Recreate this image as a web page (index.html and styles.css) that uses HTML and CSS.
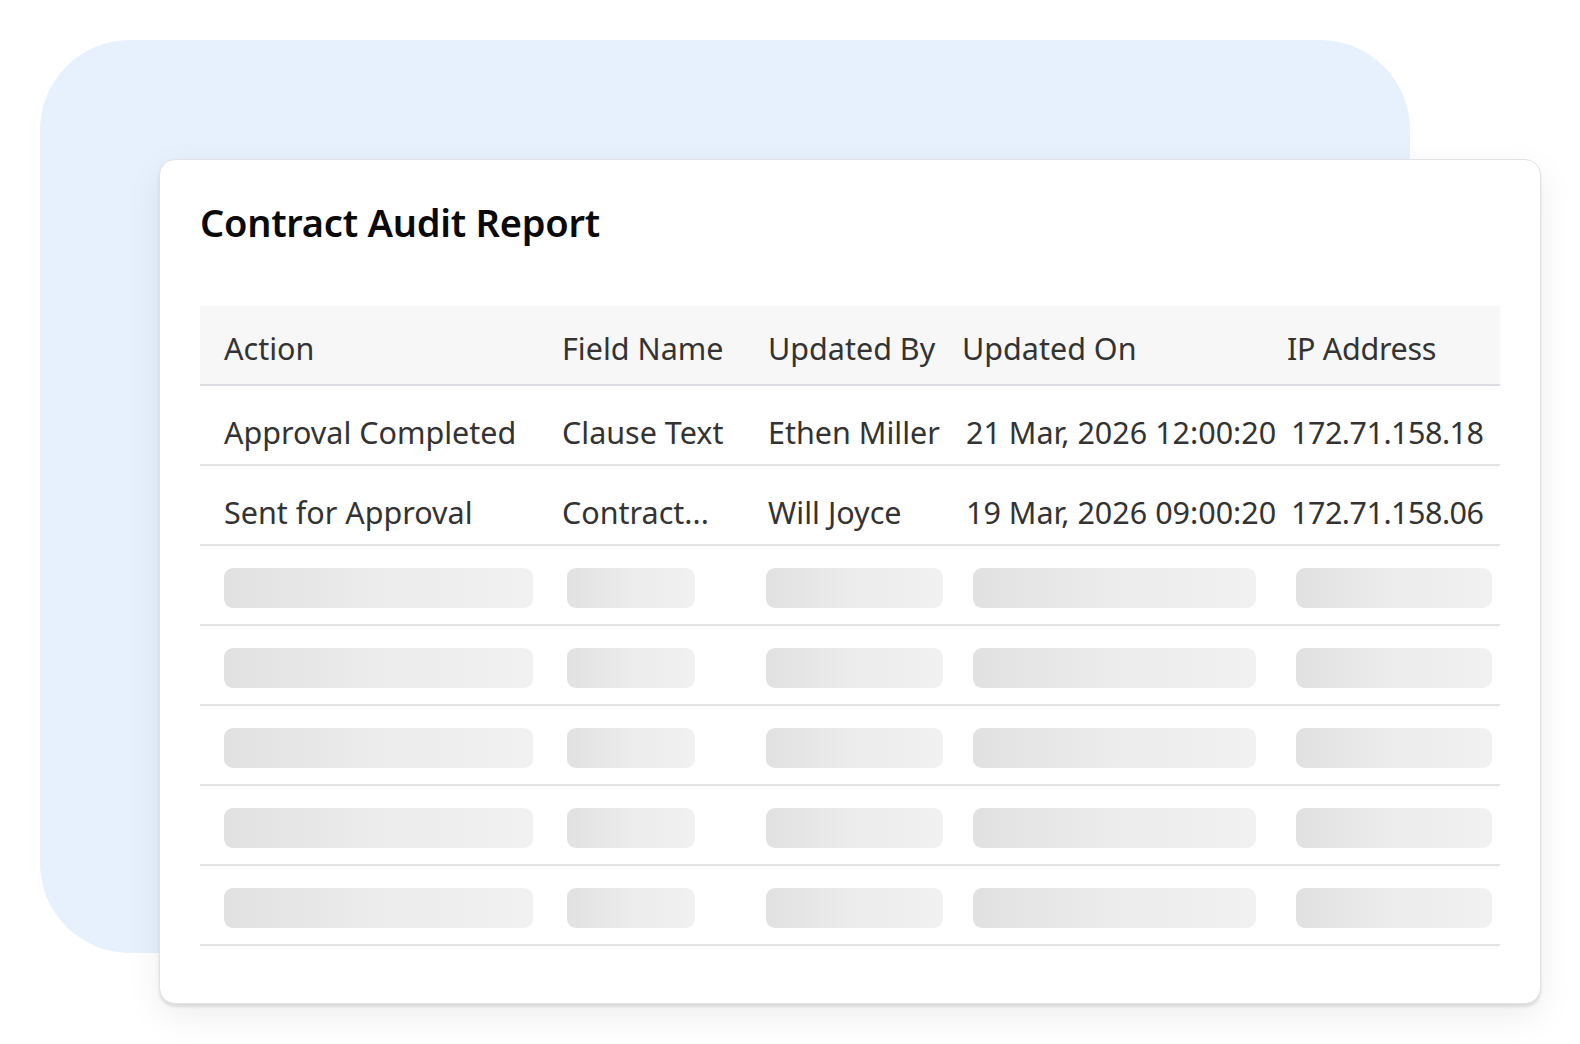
FILE: index.html
```html
<!DOCTYPE html>
<html lang="en">
<head>
<meta charset="utf-8">
<title>Contract Audit Report</title>
<link rel="stylesheet" href="styles.css">
</head>
<body>
<div class="stage">
  <div class="backdrop"></div>
  <section class="card">
    <h1 class="title">Contract Audit Report</h1>
    <div class="table">
      <div class="row head">
        <div class="cell">Action</div>
        <div class="cell">Field Name</div>
        <div class="cell">Updated By</div>
        <div class="cell">Updated On</div>
        <div class="cell ip-head">IP Address</div>
      </div>
      <div class="row data">
        <div class="cell">Approval Completed</div>
        <div class="cell">Clause Text</div>
        <div class="cell">Ethen Miller</div>
        <div class="cell c4">21 Mar, 2026 12:00:20</div>
        <div class="cell c5">172.71.158.18</div>
      </div>
      <div class="row data">
        <div class="cell">Sent for Approval</div>
        <div class="cell">Contract...</div>
        <div class="cell">Will Joyce</div>
        <div class="cell c4">19 Mar, 2026 09:00:20</div>
        <div class="cell c5">172.71.158.06</div>
      </div>
      <div class="row skel-row">
        <div class="sk sk1"></div><div class="sk sk2"></div><div class="sk sk3"></div><div class="sk sk4"></div><div class="sk sk5"></div>
      </div>
      <div class="row skel-row">
        <div class="sk sk1"></div><div class="sk sk2"></div><div class="sk sk3"></div><div class="sk sk4"></div><div class="sk sk5"></div>
      </div>
      <div class="row skel-row">
        <div class="sk sk1"></div><div class="sk sk2"></div><div class="sk sk3"></div><div class="sk sk4"></div><div class="sk sk5"></div>
      </div>
      <div class="row skel-row">
        <div class="sk sk1"></div><div class="sk sk2"></div><div class="sk sk3"></div><div class="sk sk4"></div><div class="sk sk5"></div>
      </div>
      <div class="row skel-row">
        <div class="sk sk1"></div><div class="sk sk2"></div><div class="sk sk3"></div><div class="sk sk4"></div><div class="sk sk5"></div>
      </div>
    </div>
  </section>
</div>
</body>
</html>
```

FILE: styles.css
```css
* { box-sizing: border-box; }

html, body {
  margin: 0;
  padding: 0;
  background: #ffffff;
  width: 1580px;
  height: 1044px;
  overflow: hidden;
}

body {
  font-family: "Noto Sans", "Open Sans", sans-serif;
  color: #333333;
}

.stage {
  display: grid;
  padding: 40px 0 0 40px;
}

.backdrop {
  grid-area: 1 / 1;
  width: 1370px;
  height: 913px;
  background: #e6f1fd;
  border-radius: 90px;
}

.card {
  grid-area: 1 / 1;
  margin: 119px 0 0 119px;
  width: 1382px;
  height: 845px;
  background: #ffffff;
  border: 1.5px solid #e2e2e2;
  border-radius: 16px;
  box-shadow: 0 3px 3px rgba(0, 0, 0, 0.10), 0 12px 36px rgba(0, 0, 0, 0.07);
  padding: 0 40px 0 40px;
}

.title {
  margin: 36px 0 0 0;
  font-size: 38px;
  line-height: 52px;
  font-weight: 600;
  color: #0a0a0a;
  letter-spacing: -0.25px;
}

.table {
  margin-top: 58px;
  width: 1300px;
}

.row {
  display: grid;
  grid-template-columns: 338px 206px 194px 325px 1fr;
  align-items: center;
  height: 80px;
  padding-left: 24px;
  border-bottom: 2px solid #e3e3e3;
  font-size: 30.5px;
  letter-spacing: 0;
}

.row.head {
  background: #f7f7f7;
  border-bottom-color: #dcdde2;
  padding-top: 2px;
}

.row.data {
  padding-top: 10px;
}

.cell {
  white-space: nowrap;
  padding-top: 3px;
}

.ip-head { letter-spacing: -0.3px; }
.c4 { margin-left: 4px; }
.c5 { margin-left: 4px; letter-spacing: -0.5px; }

.skel-row {
  align-items: start;
  padding-top: 22px;
}

.sk {
  height: 40px;
  border-radius: 9px;
  background: linear-gradient(90deg, #e1e1e1 0%, #ececec 50%, #f1f1f1 100%);
}

.sk1 { width: 309px; }
.sk2 { width: 128px; margin-left: 5px; }
.sk3 { width: 177px; margin-left: -2px; }
.sk4 { width: 283px; margin-left: 11px; }
.sk5 { width: 196px; margin-left: 9px; }
```
